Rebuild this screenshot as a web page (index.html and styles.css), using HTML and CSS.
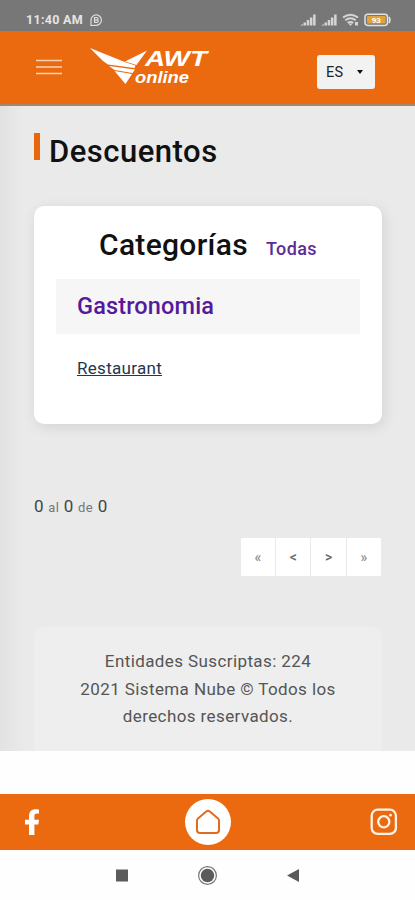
FILE: index.html
```html
<!DOCTYPE html>
<html lang="es">
<head>
<meta charset="utf-8">
<title>Descuentos</title>
<link rel="stylesheet" href="styles.css">
</head>
<body>
<div class="status">
  <span class="time">11:40 AM</span>
  <svg class="badge" width="14" height="14" viewBox="0 0 14 14" fill="none" stroke="#dedede" stroke-width="1.2"><path d="M2 12.5V7a5.2 5.2 0 1 1 5.200 5.300z"/><path d="M5.500 4.500h2.300a1.200 1.200 0 0 1 0 2.400H5.500zM5.500 6.900h2.600a1.200 1.200 0 0 1 0 2.400H5.500z"/></svg>
  <svg class="signals" width="92" height="14" viewBox="0 0 92 14">
    <g fill="#d5d5d5"><path d="M0 12.500 3 11v1.500zM3.500 9.500H6v3H3.500zM6.700 7h2.500v5.500H6.700zM9.900 4.500h2.500v8H9.900zM13.100 1.500h2.500v11h-2.500z"/><path d="M21 12.500 24 11v1.500zM24.500 9.500H27v3h-2.500zM27.700 7h2.500v5.500h-2.500zM30.900 4.500h2.500v8h-2.500zM34.100 1.500h2.500v11h-2.500z"/></g>
    <g fill="none" stroke="#d5d5d5" stroke-width="2"><path d="M43 4.500q7.500-5.500 15 0M45.300 7.200q5.200-3.700 10.400 0M47.700 9.900q2.800-2 5.600 0"/></g>
    <path d="m50.500 13-2-2.500h4zM55 9h3v3.500h-3z" fill="#d5d5d5"/>
    <rect x="65" y="1.200" width="22.500" height="11.200" rx="2.800" fill="#777" stroke="#e2e2e2" stroke-width="1.500"/>
    <path d="M89 4q2 3 0 6" fill="none" stroke="#e2e2e2" stroke-width="1.500"/>
    <rect x="67" y="3" width="18.500" height="7.600" rx="1" fill="#e3a33b"/>
    <text x="76.300" y="10" class="charge">93</text>
  </svg>
</div>
<header class="header">
  <svg class="menu" width="26" height="17" viewBox="0 0 26 17" stroke="#f9d3b4" stroke-width="1.700"><path d="M0 1.500h26M0 8h26M0 14.500h26"/></svg>
  <svg class="logo" width="120" height="40" viewBox="0 0 120 40">
    <path fill="#fff" d="M0 1 36 15.500 45.500 18.500 44.500 21 18 17.500 13 14zM35 14.500 57 3.500 46.500 18zM19 19 45 22.500 42.500 26 24.500 23zM24.500 24 42 27 35.500 37z"/>
    <text x="55" y="19" textLength="62" lengthAdjust="spacingAndGlyphs" class="awt">AWT</text>
    <text x="45" y="35.500" textLength="54" lengthAdjust="spacingAndGlyphs" class="online">online</text>
  </svg>
  <button class="lang">ES<i class="caret"></i></button>
</header>
<main class="main">
  <h1 class="title"><i class="bar"></i><span>Descuentos</span></h1>
  <section class="card">
    <div class="card-head"><h2>Categorías</h2><a class="all">Todas</a></div>
    <div class="category">Gastronomia</div>
    <a class="sub">Restaurant</a>
  </section>
  <p class="count">0 <small>al</small> 0 <small>de</small> 0</p>
  <div class="pager"><span class="dim">«</span><span>&lt;</span><span>&gt;</span><span class="dim">»</span></div>
  <footer class="footer"><div>Entidades Suscriptas: 224</div><div>2021 Sistema Nube © Todos los</div><div>derechos reservados.</div></footer>
</main>
<nav class="nav">
  <svg width="16" height="27" viewBox="0 0 16 27"><path fill="#fff" d="M4 26V15.500H0v-4.700h4V7.300C4 2.500 6.500.2 10.500.2c1.800 0 3.500.3 3.500.3v4h-2c-2 0-2.600 1.200-2.600 2.600v3.700H14l-.7 4.700H9.400V26z"/></svg>
  <span class="home"><svg width="26" height="26" viewBox="0 0 26 26" fill="none" stroke="#df6a20" stroke-width="2" stroke-linejoin="round"><path d="M2 11.500q0-1.200 1-2l8.200-7q1.800-1.500 3.600 0l8.200 7q1 .8 1 2V21q0 3-3 3H5q-3 0-3-3z"/></svg></span>
  <svg width="28" height="28" viewBox="0 0 28 28" fill="none" stroke="#fff3e6" stroke-width="2.300"><rect x="1.700" y="1.700" width="24.200" height="24.200" rx="6"/><circle cx="13.800" cy="13.800" r="5.600"/><circle cx="20.500" cy="7.200" r="1.400" fill="#fff3e6" stroke="none"/></svg>
</nav>
<div class="system">
  <svg width="415" height="50" viewBox="0 0 415 50" fill="#5b5b5b"><rect x="116" y="19.500" width="12" height="12"/><circle cx="207.500" cy="25.500" r="6.700"/><circle cx="207.500" cy="25.500" r="8.900" fill="none" stroke="#777" stroke-width="1.200"/><path d="M287 25.500 299 19v13z"/></svg>
</div>
</body>
</html>
```
FILE: styles.css
```css
* { box-sizing: border-box; }
body { margin: 0; width: 415px; height: 900px; overflow: hidden; background: #fefefe; font-family: Roboto, "Liberation Sans", sans-serif; display: flex; flex-direction: column; }
.status { height: 31px; background: #777; display: flex; align-items: center; padding: 8px 23px 0 26px; }
.time { font-size: 12.5px; font-weight: 700; letter-spacing: .3px; color: #e4e4e4; line-height: 22px; width: 63px; white-space: nowrap; }
.signals { margin-left: auto; }
.charge { font-size: 8px; font-weight: 700; fill: #fff; text-anchor: middle; }
.header { height: 75px; background: #eb6a10; border-bottom: 2px solid #a78569; display: flex; align-items: flex-start; padding: 15px 40px 0 36px; }
.menu { margin: 13px 28px 0 0; }
.logo { margin-top: 1px; }
.awt { font: italic 700 22px "Liberation Sans", sans-serif; fill: #fff; }
.online { font: italic 700 16px "Liberation Sans", sans-serif; fill: #fff; }
.lang { margin: 9px 0 0 auto; width: 58px; height: 34px; border: 0; border-radius: 3px; background: #f2f2f2; font: 14.5px Roboto, sans-serif; letter-spacing: .3px; color: #222; padding: 0 12px 0 9px; display: flex; align-items: center; justify-content: space-between; }
.caret { border: 3px solid transparent; border-top: 4px solid #111; border-bottom: 0; }
.main { height: 645px; padding: 27px 33px 0 34px; background: linear-gradient(90deg, #e2e2e2, #eaeaea 24px, #eaeaea); }
.title { margin: 0; height: 73px; display: flex; align-items: flex-start; font-weight: 500; font-size: 31px; line-height: 37px; letter-spacing: .5px; color: #111; }
.bar { width: 6px; height: 27px; background: #e8670c; margin-right: 9px; }
.card { height: 218px; background: #fff; border-radius: 10px; padding: 20px 22px 0; box-shadow: 2px 3px 14px rgba(0,0,0,.1); }
.card-head { display: flex; height: 53px; align-items: baseline; padding-left: 43px; }
.card-head h2 { margin: 0; width: 149px; font-size: 30px; font-weight: 500; line-height: 37px; letter-spacing: .3px; color: #111; }
.all { margin-left: 18px; font-size: 18px; font-weight: 500; letter-spacing: .35px; color: #5d2b99; }
.category { height: 55px; background: #f6f6f6; padding-left: 21px; line-height: 54px; font-size: 23.5px; font-weight: 500; letter-spacing: .15px; color: #551a9b; }
.sub { display: block; margin: 23px 0 0 21px; font-size: 17px; line-height: 22px; letter-spacing: .3px; color: #243750; text-decoration: underline; }
.count { margin: 71px 0 0; font-size: 17px; line-height: 22px; letter-spacing: .2px; color: #444; }
.count small { font-size: 13px; color: #777; letter-spacing: .5px; }
.pager { margin: 19px 1px 0 0; display: flex; justify-content: flex-end; gap: 1px; }
.pager span { width: 34.3px; height: 38px; background: #fff; text-align: center; line-height: 38px; font-size: 14px; font-weight: 500; color: #666; border-radius: 1px; }
.pager .dim { color: #8a8a8a; }
.footer { margin-top: 51px; height: 124px; background: #eee; border-radius: 8px 8px 0 0; padding-top: 21px; text-align: center; font-size: 17px; line-height: 27.500px; letter-spacing: .4px; color: #555; white-space: nowrap; }
.nav { margin-top: 43px; height: 56px; background: #eb6a10; display: flex; align-items: center; justify-content: space-between; padding: 0 17px 0 25px; }
.home { width: 46px; height: 46px; background: #fff; border-radius: 50%; display: flex; align-items: center; justify-content: center; margin-left: 4px; }
.system { height: 50px; }
.system svg { display: block; }
```
